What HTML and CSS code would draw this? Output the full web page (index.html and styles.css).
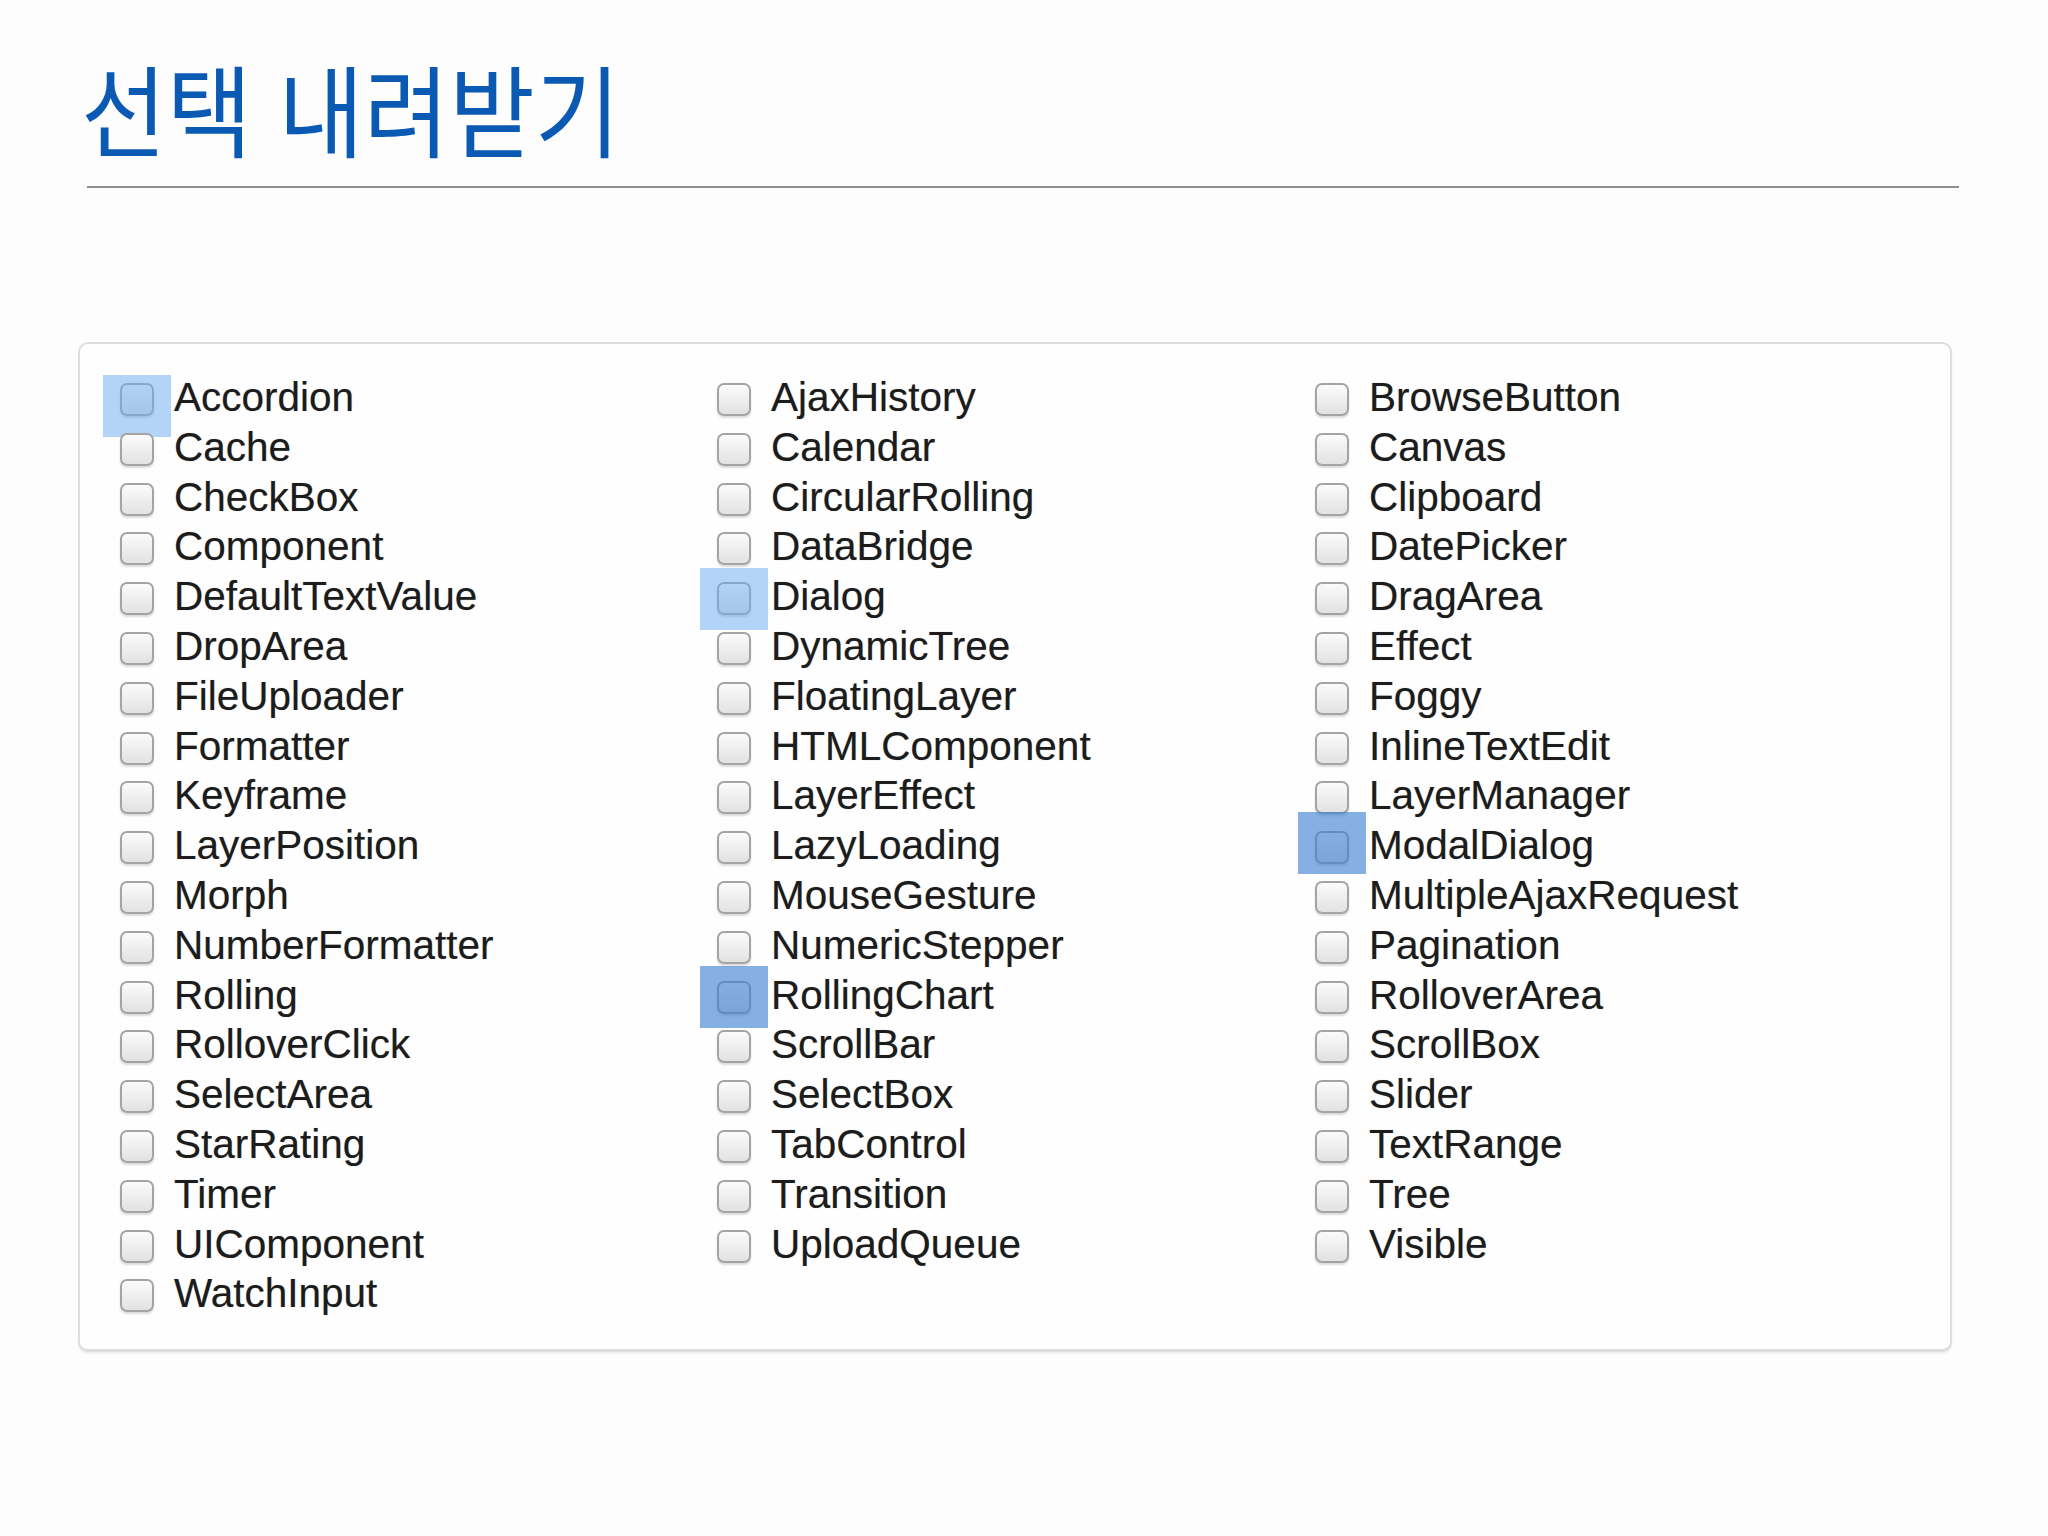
FILE: index.html
```html
<!DOCTYPE html>
<html lang="ko">
<head>
<meta charset="utf-8">
<title>선택 내려받기</title>
<link rel="stylesheet" href="styles.css">
</head>
<body>
<main class="page">
  <header class="header">
    <h1 class="title"><span class="title-text">선택 내려받기</span></h1>
  </header>
  <hr class="rule">
  <section class="panel">
    <div class="grid">
      <ul class="col">
        <li class="item"><span class="box sel sel-light sel-low"></span>Accordion</li>
        <li class="item"><span class="box"></span>Cache</li>
        <li class="item"><span class="box"></span>CheckBox</li>
        <li class="item"><span class="box"></span>Component</li>
        <li class="item"><span class="box"></span>DefaultTextValue</li>
        <li class="item"><span class="box"></span>DropArea</li>
        <li class="item"><span class="box"></span>FileUploader</li>
        <li class="item"><span class="box"></span>Formatter</li>
        <li class="item"><span class="box"></span>Keyframe</li>
        <li class="item"><span class="box"></span>LayerPosition</li>
        <li class="item"><span class="box"></span>Morph</li>
        <li class="item"><span class="box"></span>NumberFormatter</li>
        <li class="item"><span class="box"></span>Rolling</li>
        <li class="item"><span class="box"></span>RolloverClick</li>
        <li class="item"><span class="box"></span>SelectArea</li>
        <li class="item"><span class="box"></span>StarRating</li>
        <li class="item"><span class="box"></span>Timer</li>
        <li class="item"><span class="box"></span>UIComponent</li>
        <li class="item"><span class="box"></span>WatchInput</li>
      </ul>
      <ul class="col">
        <li class="item"><span class="box"></span>AjaxHistory</li>
        <li class="item"><span class="box"></span>Calendar</li>
        <li class="item"><span class="box"></span>CircularRolling</li>
        <li class="item"><span class="box"></span>DataBridge</li>
        <li class="item"><span class="box sel sel-light"></span>Dialog</li>
        <li class="item"><span class="box"></span>DynamicTree</li>
        <li class="item"><span class="box"></span>FloatingLayer</li>
        <li class="item"><span class="box"></span>HTMLComponent</li>
        <li class="item"><span class="box"></span>LayerEffect</li>
        <li class="item"><span class="box"></span>LazyLoading</li>
        <li class="item"><span class="box"></span>MouseGesture</li>
        <li class="item"><span class="box"></span>NumericStepper</li>
        <li class="item"><span class="box sel sel-dark"></span>RollingChart</li>
        <li class="item"><span class="box"></span>ScrollBar</li>
        <li class="item"><span class="box"></span>SelectBox</li>
        <li class="item"><span class="box"></span>TabControl</li>
        <li class="item"><span class="box"></span>Transition</li>
        <li class="item"><span class="box"></span>UploadQueue</li>
      </ul>
      <ul class="col">
        <li class="item"><span class="box"></span>BrowseButton</li>
        <li class="item"><span class="box"></span>Canvas</li>
        <li class="item"><span class="box"></span>Clipboard</li>
        <li class="item"><span class="box"></span>DatePicker</li>
        <li class="item"><span class="box"></span>DragArea</li>
        <li class="item"><span class="box"></span>Effect</li>
        <li class="item"><span class="box"></span>Foggy</li>
        <li class="item"><span class="box"></span>InlineTextEdit</li>
        <li class="item"><span class="box"></span>LayerManager</li>
        <li class="item"><span class="box sel sel-dark sel-high"></span>ModalDialog</li>
        <li class="item"><span class="box"></span>MultipleAjaxRequest</li>
        <li class="item"><span class="box"></span>Pagination</li>
        <li class="item"><span class="box"></span>RolloverArea</li>
        <li class="item"><span class="box"></span>ScrollBox</li>
        <li class="item"><span class="box"></span>Slider</li>
        <li class="item"><span class="box"></span>TextRange</li>
        <li class="item"><span class="box"></span>Tree</li>
        <li class="item"><span class="box"></span>Visible</li>
      </ul>
    </div>
  </section>
</main>
</body>
</html>
```
FILE: styles.css
```css
html, body {
  margin: 0;
  padding: 0;
  background: #fdfdfd;
}

.page {
  padding-top: 55px;
  width: 2048px;
  height: 1536px;
  box-sizing: border-box;
}

.header {
  padding-left: 81px;
  height: 104px;
}

.title {
  margin: 0;
  font-family: "Noto Sans CJK KR", "Noto Sans", sans-serif;
  font-weight: 400;
  font-size: 100px;
  line-height: 104px;
  color: #0a5ab4;
}

.title-text {
  display: inline-block;
  transform: scaleX(0.93);
  transform-origin: left center;
  white-space: nowrap;
}

.rule {
  margin: 27px 0 0 87px;
  width: 1872px;
  height: 0;
  border: 0;
  border-top: 2px solid #8e8e8e;
}

.panel {
  margin: 154px 0 0 78px;
  width: 1874px;
  height: 1010px;
  box-sizing: border-box;
  border: 2px solid #dedede;
  border-bottom-width: 3px;
  border-radius: 10px;
  box-shadow: 0 2px 2px rgba(0, 0, 0, 0.06);
  background: #fefefe;
  padding: 29px 0 0 40px;
}

.grid {
  display: grid;
  grid-template-columns: 597px 598px 597px;
  align-items: start;
}

.col {
  list-style: none;
  margin: 0;
  padding: 0;
}

.item {
  height: 49.8px;
  line-height: 49.8px;
  font-family: "Liberation Sans", Arial, sans-serif;
  font-size: 40.5px;
  color: #1c1c1c;
  white-space: nowrap;
  text-shadow: 0 0 1px rgba(0, 0, 0, 0.35);
}

.box {
  position: relative;
  display: inline-block;
  width: 34px;
  height: 33px;
  box-sizing: border-box;
  margin-right: 20px;
  vertical-align: -5px;
  border: 2px solid #a4a4a4;
  border-radius: 7px;
  background: linear-gradient(#fbfbfb, #e2e2e2);
  box-shadow: 0 2px 2px rgba(0, 0, 0, 0.14);
}

.sel::after {
  content: "";
  position: absolute;
  left: -19px;
  top: -16.5px;
  width: 68px;
  height: 62px;
}

.sel-light::after {
  background: rgba(110, 170, 240, 0.52);
}

.sel-dark::after {
  background: rgba(60, 128, 212, 0.62);
}

.sel-low::after {
  top: -10.5px;
}

.sel-high::after {
  top: -21.5px;
}
```
